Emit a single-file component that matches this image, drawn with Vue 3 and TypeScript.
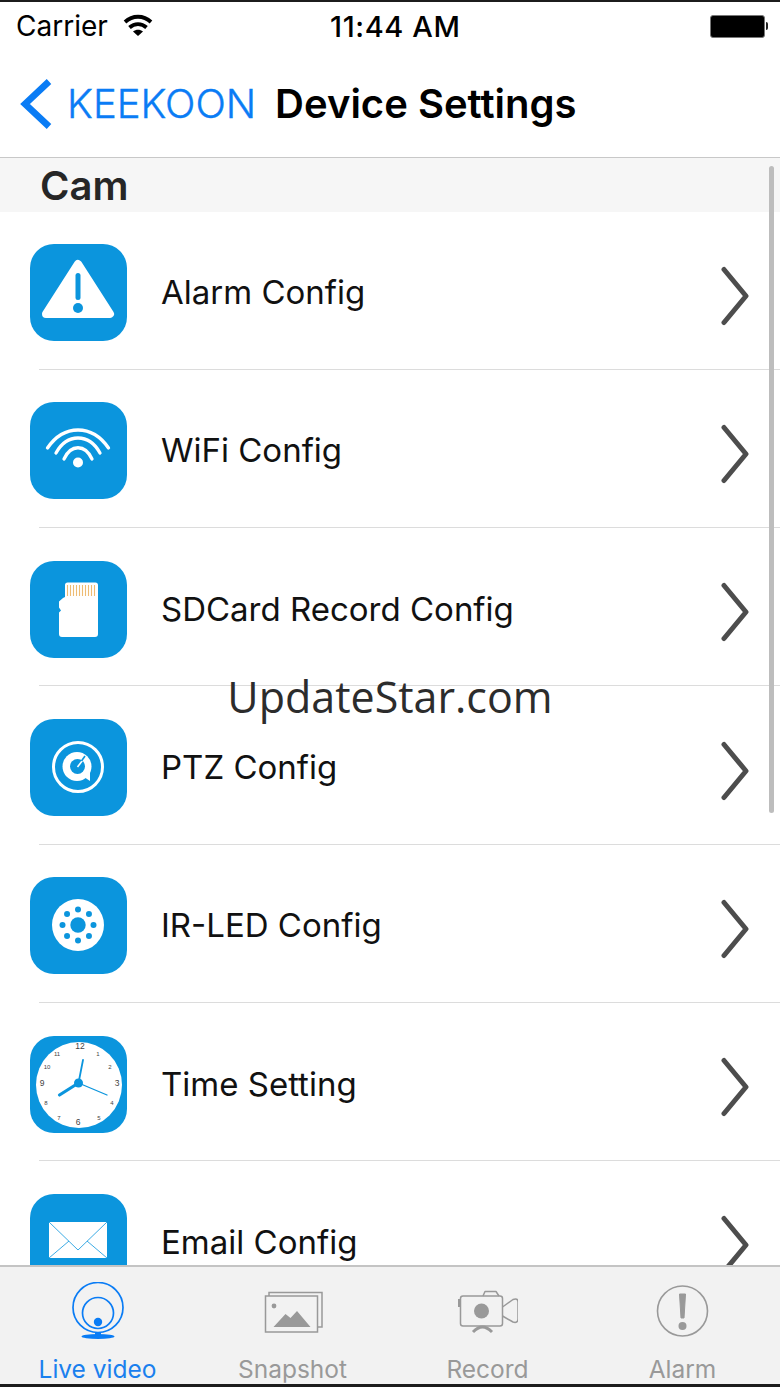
<script setup lang="ts">
const rows = [
  { id: "alarm", label: "Alarm Config" },
  { id: "wifi", label: "WiFi Config" },
  { id: "sd", label: "SDCard Record Config" },
  { id: "ptz", label: "PTZ Config" },
  { id: "led", label: "IR-LED Config" },
  { id: "time", label: "Time Setting" },
  { id: "email", label: "Email Config" },
];

const tabs = [
  { id: "live", label: "Live video" },
  { id: "snapshot", label: "Snapshot" },
  { id: "record", label: "Record" },
  { id: "alarm", label: "Alarm" },
];

// IR-LED dots around the centre
const ledDots = Array.from({ length: 8 }, (_, i) => {
  const a = (i * Math.PI) / 4;
  return { x: 48 + 15.5 * Math.cos(a), y: 48 + 15.5 * Math.sin(a) };
});

const clockNumbers = [
  { n: "12", x: 50, y: 11, s: 8.5 },
  { n: "1", x: 68, y: 18, s: 6 },
  { n: "2", x: 80, y: 31, s: 6 },
  { n: "3", x: 87, y: 48, s: 8.5 },
  { n: "4", x: 82, y: 67, s: 6 },
  { n: "5", x: 69, y: 82, s: 6 },
  { n: "6", x: 48, y: 87, s: 8.5 },
  { n: "7", x: 29, y: 82, s: 6 },
  { n: "8", x: 16, y: 67, s: 6 },
  { n: "9", x: 12, y: 48, s: 8.5 },
  { n: "10", x: 17, y: 31, s: 6 },
  { n: "11", x: 27, y: 18, s: 6 },
];
</script>

<template>
  <div class="screen">
    <header class="status">
      <div class="status-left">
        <span>Carrier</span>
        <svg width="30" height="24" viewBox="0 0 30 24" class="status-wifi">
          <path d="M2 9C9.500 2 20.500 2 28 9" fill="none" stroke="#000" stroke-width="3.800" />
          <path d="M6.500 14.500C11.500 10 18.500 10 23.500 14.500" fill="none" stroke="#000" stroke-width="3.800" />
          <path d="M10 18.500L15 23L20 18.500C17 16 13 16 10 18.500Z" fill="#000" />
        </svg>
      </div>
      <span class="status-time">11:44 AM</span>
      <div class="battery">
        <span class="battery-body"></span>
        <span class="battery-tip"></span>
      </div>
    </header>

    <nav class="navbar">
      <svg width="34" height="52" viewBox="0 0 34 52" class="back-icon">
        <path d="M30 3.500L6 26L30 48.500" fill="none" stroke="#0a7cf5" stroke-width="6.600" />
      </svg>
      <span class="back-label">KEEKOON</span>
      <span class="nav-title">Device Settings</span>
    </nav>

    <main class="list">
      <h2 class="section">Cam</h2>
      <div v-for="row in rows" :key="row.id" class="row">
        <div class="app-icon">
          <svg width="97" height="97" viewBox="0 0 97 97">
            <template v-if="row.id === 'alarm'">
              <path d="M48 20L80 70H16Z" fill="#fff" stroke="#fff" stroke-width="8" stroke-linejoin="round" />
              <rect x="45.500" y="29" width="5" height="27" rx="2.500" fill="#0b95dd" />
              <circle cx="48" cy="64" r="5" fill="#0b95dd" />
            </template>

            <template v-else-if="row.id === 'wifi'">
              <g fill="none" stroke="#fff" stroke-width="3.300" stroke-linecap="round">
                <path d="M17.500 46C34 22 62 22 78.500 46" />
                <path d="M26 51C37 31 59 31 70 51" />
                <path d="M34 57C41 42 55 42 62 57" />
              </g>
              <circle cx="48" cy="60.500" r="5" fill="#fff" />
            </template>

            <template v-else-if="row.id === 'sd'">
              <path d="M35 24C35 22.500 36 21.500 37.500 21.500H65.500C67 21.500 68 22.500 68 24V73C68 75 67 76 65 76H32C30 76 29 75 29 73V51.500L31 49.500L29 46.500V40.500L33 37L35 36Z" fill="#fff" />
              <g stroke="#eebc74" stroke-width="1.100">
                <path d="M37.500 24V35M40.500 24V35M43.500 24V35M46.500 24V35M49.500 24V35M52.500 24V35M55.500 24V35M58.500 24V35M61.500 24V35M64.500 24V35" />
              </g>
            </template>

            <template v-else-if="row.id === 'ptz'">
              <circle cx="48" cy="48" r="24.500" fill="none" stroke="#fff" stroke-width="3" />
              <circle cx="47" cy="47.500" r="14.500" fill="#fff" />
              <path d="M54 58L60 62L60 53Z" fill="#fff" />
              <circle cx="47.500" cy="47.500" r="7.500" fill="#0b95dd" />
              <path d="M47.500 48L54 39.500" stroke="#fff" stroke-width="1.600" />
              <path d="M51.500 42L55 37" stroke="#0b95dd" stroke-width="1.600" />
            </template>

            <template v-else-if="row.id === 'led'">
              <circle cx="48" cy="48" r="26" fill="#fff" />
              <circle cx="48" cy="48" r="7.700" fill="#0b95dd" />
              <circle v-for="(d, i) in ledDots" :key="i" :cx="d.x" :cy="d.y" r="3" fill="#0b95dd" />
            </template>

            <template v-else-if="row.id === 'time'">
              <circle cx="49" cy="49" r="43" fill="#fff" />
              <text
                v-for="c in clockNumbers"
                :key="c.n"
                :x="c.x"
                :y="c.y"
                :font-size="c.s"
                text-anchor="middle"
                dominant-baseline="middle"
                class="clock-num"
              >{{ c.n }}</text>
              <path d="M48.500 47L29.500 59" stroke="#0b95dd" stroke-width="3.200" stroke-linecap="round" />
              <path d="M48.500 47L53 24" stroke="#0b95dd" stroke-width="1.800" stroke-linecap="round" />
              <path d="M48.500 47L77 59" stroke="#0b95dd" stroke-width="1.300" stroke-linecap="round" />
              <circle cx="48.500" cy="47" r="4.500" fill="#0b95dd" />
            </template>

            <template v-else>
              <rect x="19" y="28" width="58" height="36" fill="#fff" />
              <g fill="none" stroke="#0b95dd" stroke-width="0.800">
                <path d="M19 28L48 56L77 28" />
                <path d="M19 64L39 47M77 64L57 47" />
              </g>
            </template>
          </svg>
        </div>
        <span class="row-label">{{ row.label }}</span>
        <svg width="30" height="60" viewBox="0 0 30 60" class="row-chevron">
          <path d="M4 3.500L26 30L4 56.500" fill="none" stroke="#4d4d4d" stroke-width="5" stroke-linecap="round" stroke-linejoin="round" />
        </svg>
      </div>
      <div class="scrollbar"></div>
      <div class="watermark">UpdateStar.com</div>
    </main>

    <footer class="tabbar">
      <div v-for="tab in tabs" :key="tab.id" class="tab" :class="{ 'tab--active': tab.id === 'live' }">
        <svg width="60" height="60" viewBox="0 0 60 60" class="tab-icon">
          <template v-if="tab.id === 'live'">
            <g fill="none" stroke="#0a7cf5" stroke-width="1.700">
              <circle cx="30" cy="25.500" r="25" />
              <circle cx="30" cy="31" r="15.500" />
            </g>
            <circle cx="30" cy="40" r="4.200" fill="#0a7cf5" />
            <path d="M30 50V54" stroke="#0a7cf5" stroke-width="6" />
            <ellipse cx="30" cy="54.500" rx="16.500" ry="2.400" fill="#0a7cf5" />
          </template>

          <template v-else-if="tab.id === 'snapshot'">
            <g fill="none" stroke="#999" stroke-width="1.500">
              <path d="M6 14V10.500H59V45H54.500" />
              <rect x="2.500" y="14" width="52" height="36" />
            </g>
            <circle cx="11" cy="24" r="2.400" fill="#999" />
            <path d="M10.500 45L22.500 32L27.500 36L34 29L47.500 45Z" fill="#999" />
          </template>

          <template v-else-if="tab.id === 'record'">
            <g fill="none" stroke="#999" stroke-width="1.500" stroke-linejoin="round">
              <rect x="2.500" y="14" width="42" height="30" rx="2.500" />
              <path d="M25 14L27 9.500H38L41 14" />
              <path d="M44.500 25L55 17.500C58 16.500 60 17 60 20V37C60 40 58 41 55 40L44.500 34" />
            </g>
            <rect x="0" y="17" width="2.500" height="8" fill="#999" />
            <circle cx="23.500" cy="29" r="7.500" fill="#999" />
            <path d="M15 50C19 46 21 45 24.500 45C28 45 30 46 34 50" fill="none" stroke="#999" stroke-width="3" />
          </template>

          <template v-else>
            <circle cx="29.500" cy="29" r="25" fill="none" stroke="#999" stroke-width="1.600" />
            <path d="M26.500 12H32.500L31 36H28Z" fill="#999" stroke="#999" stroke-linejoin="round" />
            <circle cx="29.500" cy="44" r="4" fill="#999" />
          </template>
        </svg>
        <span class="tab-label">{{ tab.label }}</span>
      </div>
    </footer>
  </div>
</template>

<style scoped>
.screen {
  width: 780px;
  height: 1387px;
  display: flex;
  flex-direction: column;
  overflow: hidden;
  background: #fff;
  border-top: 2px solid #1c1c1c;
  border-bottom: 3px solid #1c1c1c;
  box-sizing: border-box;
  font-family: Inter, "Liberation Sans", sans-serif;
  color: #000;
}

.status {
  height: 48px;
  flex-shrink: 0;
  display: flex;
  align-items: center;
  justify-content: space-between;
  padding: 0 12px 0 16px;
  font-size: 28px;
  position: relative;
}

.status-left {
  display: flex;
  align-items: center;
  gap: 15px;
}

.status-wifi {
  margin-top: -3px;
}

.status-time {
  position: absolute;
  left: 330px;
  font-size: 29px;
  font-weight: 500;
  letter-spacing: 0.6px;
}

.battery {
  display: flex;
  align-items: center;
  gap: 1px;
}

.battery-body {
  width: 55px;
  height: 23px;
  background: #000;
  border: 1px solid #777;
  border-radius: 3px;
  box-sizing: border-box;
}

.battery-tip {
  width: 2px;
  height: 8px;
  background: #222;
  border-radius: 0 2px 2px 0;
}

.navbar {
  height: 107px;
  flex-shrink: 0;
  display: flex;
  align-items: center;
  padding-left: 19px;
  border-bottom: 1px solid #c8c8c8;
}

.back-icon {
  margin-top: 1px;
}

.back-label {
  margin-left: 14px;
  font-size: 40px;
  font-weight: 300;
  color: #0a7cf5;
  -webkit-text-stroke: 0.4px #0a7cf5;
}

.nav-title {
  margin-left: 19px;
  font-size: 40px;
  font-weight: 600;
}

.list {
  flex: 1;
  min-height: 0;
  overflow: hidden;
  position: relative;
}

.section {
  margin: 0;
  height: 53.500px;
  padding-left: 40px;
  background: #f6f6f6;
  color: #262626;
  font-size: 40px;
  font-weight: 600;
  line-height: 56px;
}

.row {
  height: 158.300px;
  display: flex;
  align-items: center;
  padding-left: 30px;
  position: relative;
  box-sizing: border-box;
  flex-shrink: 0;
}

.row::after {
  content: "";
  position: absolute;
  left: 39px;
  right: 0;
  bottom: 0;
  height: 1px;
  background: #dcdcdc;
}

.row:last-of-type::after {
  display: none;
}

.app-icon {
  width: 97px;
  height: 97px;
  border-radius: 24px;
  background: #0b95dd;
  flex-shrink: 0;
  margin-top: 4px;
}

.row-label {
  margin-left: 34px;
  margin-top: 3px;
  font-size: 33px;
  color: #111;
}

.row-chevron {
  margin-left: auto;
  margin-right: 30px;
  margin-top: 10px;
}

.scrollbar {
  position: absolute;
  top: 8px;
  right: 6px;
  width: 5px;
  height: 647px;
  border-radius: 3px;
  background: #bdbdbd;
}

.watermark {
  position: absolute;
  left: 0;
  right: 0;
  top: 509px;
  text-align: center;
  font-family: "Open Sans", sans-serif;
  font-size: 43px;
  color: #2c2c2c;
}

.tabbar {
  height: 119px;
  flex-shrink: 0;
  display: grid;
  grid-template-columns: repeat(4, 1fr);
  background: #f2f2f2;
  border-top: 2px solid #c4c4c4;
  box-sizing: border-box;
}

.tab {
  display: flex;
  flex-direction: column;
  align-items: center;
  color: #999;
  padding-top: 15px;
}

.tab--active {
  color: #1a80ee;
}

.tab-label {
  margin-top: 13px;
  font-size: 24.500px;
  line-height: 28px;
}

.clock-num {
  font-family: "Liberation Sans", sans-serif;
  fill: #444;
}
</style>

<style>
body {
  background: #fff;
}
</style>
